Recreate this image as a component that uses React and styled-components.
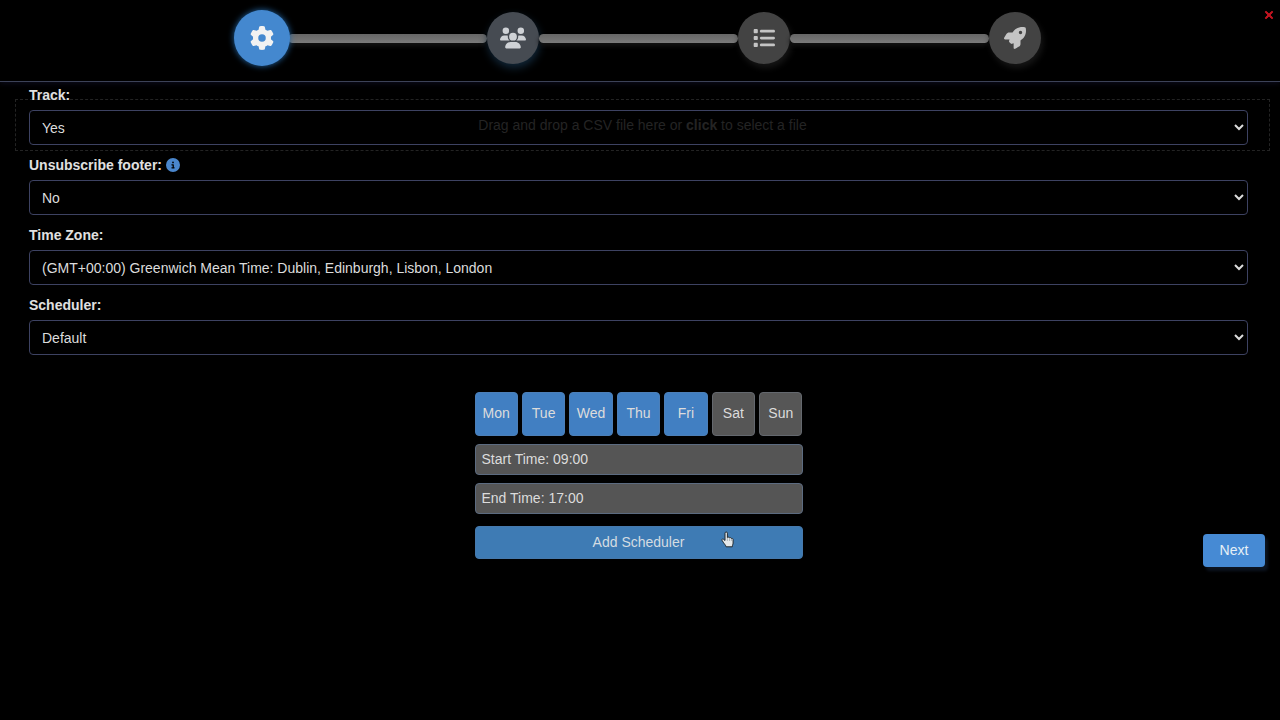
import React, { useState } from "react";
import styled, { createGlobalStyle, css } from "styled-components";
import { FaGear, FaUsers, FaList, FaRocket, FaCircleInfo, FaXmark } from "react-icons/fa6";

const GlobalStyle = createGlobalStyle`
  * { box-sizing: border-box; }
  html { color-scheme: dark; background: #000; }
  body {
    margin: 0;
    background: #000;
    color: #dcdcdc;
    font: 14px/20px "Liberation Sans", Arial, sans-serif;
  }
  button, input, select { font: inherit; }
`;

const Page = styled.div`
  position: relative;
  min-height: 100vh;
`;

const Header = styled.header`
  height: 82px;
  padding: 12px 3px 0 0;
  border-bottom: 1px solid #3c4258;
  box-shadow: 0 2px 5px #0a0a18;
`;

const Steps = styled.nav`
  display: flex;
  align-items: center;
  width: 63%;
  margin: 0 auto;
`;

const Step = styled.button`
  display: grid;
  place-items: center;
  flex: none;
  width: 52px;
  height: 52px;
  padding: 0;
  border: 0;
  border-radius: 50%;
  background: #434343;
  color: #c4c4c4;
  box-shadow: 2px 4px 6px #161616;

  svg { display: block; }

  ${({ $state }) => $state === "current" && css`
    position: relative;
    z-index: 1;
    width: 56px;
    height: 56px;
    margin: -2px;
    background: #4488cf;
    color: #f2f2f2;
    box-shadow: 0 0 6px #2468a8;
  `}
  ${({ $state }) => $state === "next" && css`
    background: #464b52;
    color: #cfd2d6;
    box-shadow: 1px 4px 8px #12283a;
  `}
`;

const StepLine = styled.span`
  flex: 1;
  height: 9px;
  border-radius: 5px;
  background: linear-gradient(#666, #7a7a7a);
  box-shadow: 0 3px 4px #121212;
`;

const Close = styled.button`
  position: absolute;
  top: 9px;
  right: 5px;
  display: grid;
  place-items: center;
  width: 12px;
  height: 12px;
  padding: 0;
  border: 0;
  background: none;
  color: #c01420;
`;

const Form = styled.form`
  position: relative;
`;

const DropZone = styled.div`
  position: absolute;
  top: 17px;
  left: 15px;
  right: 10px;
  height: 52px;
  display: grid;
  place-items: center;
  border: 1px dashed #232323;
  color: #242424;
  pointer-events: none;
`;

const Fields = styled.div`
  position: relative;
  display: flex;
  flex-direction: column;
  gap: 10px;
  padding: 3px 32px 0 29px;
`;

const Field = styled.div`
  display: flex;
  flex-direction: column;
  gap: 5px;
`;

const LabelRow = styled.div`
  display: flex;
  align-items: center;
  gap: 4px;
  height: 20px;
  color: #4a86cc;
`;

const Label = styled.label`
  color: #e0e0e0;
  font-weight: bold;
`;

const Select = styled.select`
  width: 100%;
  height: 35px;
  padding: 0 0 0 8px;
  border: 1px solid #3d4262;
  border-radius: 4px;
  background: transparent;
  color: #dcdcdc;
  option { background: #000; }
`;

const BottomRow = styled.div`
  display: grid;
  grid-template-columns: 1fr 328px 1fr;
  align-items: end;
  padding: 37px 15px 24px 12px;
`;

const Scheduler = styled.section`
  grid-column: 2;
  display: flex;
  flex-direction: column;
  gap: 8px;
  padding-bottom: 8px;
`;

const Days = styled.div`
  display: grid;
  grid-template-columns: repeat(7, 1fr);
  gap: 4px;
`;

const Day = styled.button`
  height: 44px;
  padding: 0 0 2px;
  border: 1px solid ${({ $on }) => ($on ? "#4c7fb8" : "#64686e")};
  border-radius: 4px;
  background: ${({ $on }) => ($on ? "#417fc2" : "#565656")};
  color: #dcdcdc;
`;

const TimeInput = styled.input`
  width: 100%;
  height: 31px;
  padding: 0 6px 2px;
  border: 1px solid #5c6b80;
  border-radius: 4px;
  background: #555;
  color: #dcdcdc;
`;

const AddButton = styled.button`
  position: relative;
  height: 33px;
  margin-top: 4px;
  padding: 0 0 2px;
  border: 1px solid #4679ac;
  border-radius: 4px;
  background: #3e7bb4;
  color: #d4dce2;
`;

const Pointer = styled.svg`
  position: absolute;
  top: 4px;
  right: 68px;
`;

const NextButton = styled.button`
  justify-self: end;
  width: 62px;
  height: 33px;
  padding: 0 0 2px;
  border: 0;
  border-radius: 4px;
  background: #468ad4;
  color: #e6f0f6;
  box-shadow: 3px 4px 3px #0c1420;
`;

const STEPS = [
  { name: "Settings", Icon: FaGear, size: 24, state: "current" },
  { name: "Recipients", Icon: FaUsers, size: 26, state: "next" },
  { name: "Sequence", Icon: FaList, size: 22 },
  { name: "Launch", Icon: FaRocket, size: 22 },
];

const FIELDS = [
  { id: "track", label: "Track:", options: ["Yes", "No"] },
  { id: "footer", label: "Unsubscribe footer:", options: ["No", "Yes"], info: true },
  {
    id: "zone",
    label: "Time Zone:",
    options: ["(GMT+00:00) Greenwich Mean Time: Dublin, Edinburgh, Lisbon, London"],
  },
  { id: "scheduler", label: "Scheduler:", options: ["Default"] },
];

const DAYS = ["Mon", "Tue", "Wed", "Thu", "Fri", "Sat", "Sun"];

function HandPointer() {
  return (
    <Pointer width="13" height="17" viewBox="0 0 13 17" aria-hidden="true">
      <path
        d="M4 9.5V2.2a1.2 1.2 0 0 1 2.4 0V6.6c.2-.7 1.9-.7 2.1.3.5-.6 1.8-.3 1.9.6.7-.4 1.7 0 1.7 1V12c0 1.4-.8 2-.8 3.8H5.1c-.3-1.5-1.6-2.6-2.5-4L1 9.3c-.5-.9.6-1.6 1.4-1.1z"
        fill="#e4e8ea"
        stroke="#222a30"
        strokeWidth="1"
        strokeLinejoin="round"
      />
      <path d="M6.4 7v3M8.5 7.5V10M10.4 8V10" stroke="#8a939a" strokeWidth="0.6" />
    </Pointer>
  );
}

export default function App() {
  const [days, setDays] = useState(["Mon", "Tue", "Wed", "Thu", "Fri"]);
  const toggle = (d) =>
    setDays((cur) => (cur.includes(d) ? cur.filter((x) => x !== d) : [...cur, d]));

  return (
    <Page>
      <GlobalStyle />
      <Header>
        <Steps aria-label="Campaign steps">
          {STEPS.map(({ name, Icon, size, state }, i) => (
            <React.Fragment key={name}>
              {i > 0 && <StepLine />}
              <Step type="button" aria-label={name} $state={state}>
                <Icon size={size} />
              </Step>
            </React.Fragment>
          ))}
        </Steps>
        <Close type="button" aria-label="Close">
          <FaXmark size={12} strokeWidth={40} stroke="currentColor" />
        </Close>
      </Header>
      <Form onSubmit={(e) => e.preventDefault()}>
        <DropZone>
          <span>
            Drag and drop a CSV file here or <b>click</b> to select a file
          </span>
        </DropZone>
        <Fields>
          {FIELDS.map(({ id, label, options, info }) => (
            <Field key={id}>
              <LabelRow>
                <Label htmlFor={id}>{label}</Label>
                {info && <FaCircleInfo size={14} />}
              </LabelRow>
              <Select id={id}>
                {options.map((o) => (
                  <option key={o}>{o}</option>
                ))}
              </Select>
            </Field>
          ))}
        </Fields>
        <BottomRow>
          <Scheduler aria-label="Sending schedule">
            <Days>
              {DAYS.map((d) => (
                <Day
                  key={d}
                  type="button"
                  $on={days.includes(d)}
                  aria-pressed={days.includes(d)}
                  onClick={() => toggle(d)}
                >
                  {d}
                </Day>
              ))}
            </Days>
            <TimeInput aria-label="Start time" defaultValue="Start Time: 09:00" />
            <TimeInput aria-label="End time" defaultValue="End Time: 17:00" />
            <AddButton type="button">
              Add Scheduler
              <HandPointer />
            </AddButton>
          </Scheduler>
          <NextButton type="submit">Next</NextButton>
        </BottomRow>
      </Form>
    </Page>
  );
}
